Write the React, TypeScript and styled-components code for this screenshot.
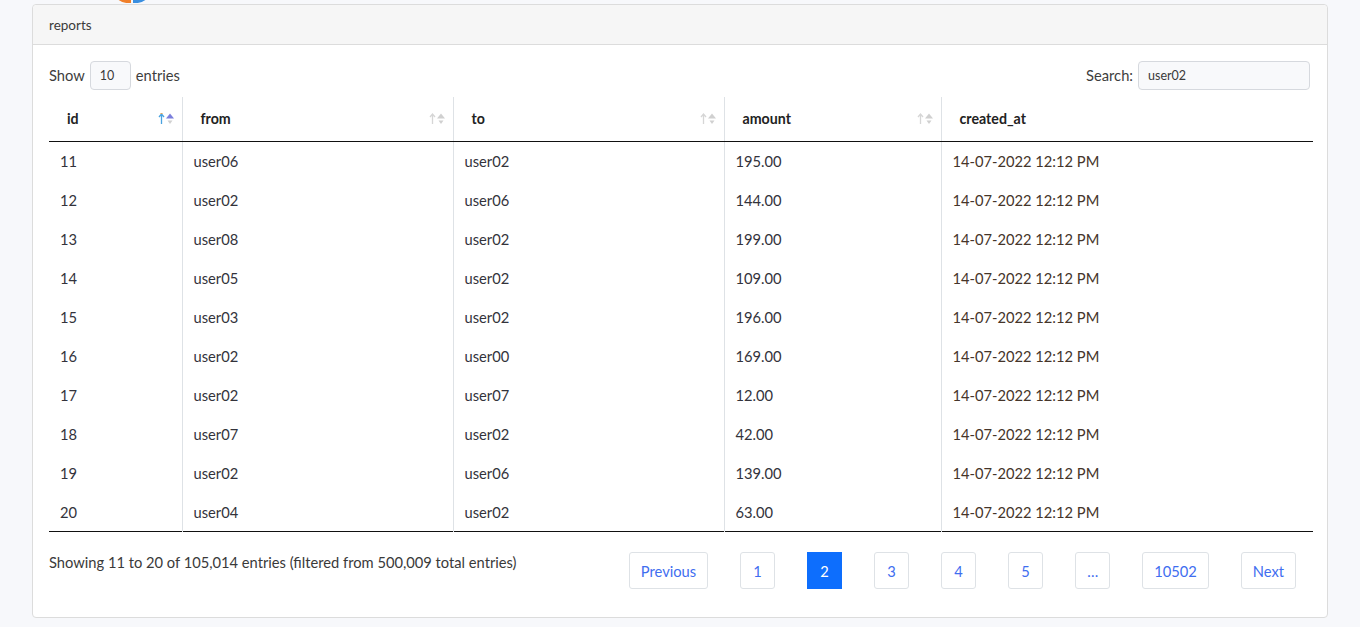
import styled, { createGlobalStyle } from "styled-components";

const GlobalStyle = createGlobalStyle`
  html, body {
    margin: 0;
    padding: 0;
    background: #f7f8fb;
    font-family: "Lato", "Open Sans", sans-serif;
    color: #212529;
  }
`;

const Page = styled.div`
  width: 1360px;
  height: 627px;
  overflow: hidden;
  padding: 0 32px;
  box-sizing: border-box;
`;

const LogoStrip = styled.div`
  height: 4px;
  overflow: hidden;
  padding-left: 80px;

  svg {
    display: block;
    margin-top: -17px;
  }
`;

const Card = styled.div`
  background: #fff;
  border: 1px solid #dcdcdc;
  border-radius: 4px;
  width: 1296px;
  box-sizing: border-box;
`;

const CardHeader = styled.div`
  background: #f6f6f6;
  border-bottom: 1px solid #dcdcdc;
  height: 39px;
  display: flex;
  align-items: center;
  padding-left: 16px;
  font-size: 13.5px;
  color: #3a3a3a;
  border-radius: 4px 4px 0 0;
`;

const CardBody = styled.div`
  padding: 15px 14px 28px 16px;
`;

const Toolbar = styled.div`
  display: flex;
  justify-content: space-between;
  align-items: center;
  font-size: 14.7px;
  color: #3d3d3d;
  height: 30px;
  margin: 0 3px 7px 0;
`;

const Label = styled.label`
  display: flex;
  align-items: center;
  gap: 5px;
`;

const FieldBox = styled.div<{ $width: number }>`
  width: ${(p) => p.$width}px;
  height: 29px;
  box-sizing: border-box;
  border: 1px solid #d6d9de;
  border-radius: 4px;
  background: #f8f9fb;
  display: flex;
  align-items: center;
  padding-left: 9px;
  font-size: 12.5px;
  color: #3a3a3a;
`;

const Table = styled.table`
  width: 100%;
  border-collapse: collapse;
  font-size: 14.7px;
  border-bottom: 1px solid #111;
`;

const HeadCell = styled.th<{ $last?: boolean }>`
  height: 44px;
  box-sizing: border-box;
  text-align: left;
  font-weight: 700;
  font-size: 14.2px;
  color: #222;
  padding: 0 10px 0 18px;
  border-bottom: 1px solid #111;
  border-right: ${(p) => (p.$last ? "none" : "1px solid #dee2e6")};
  position: relative;
`;

const SortIcon = styled.span`
  position: absolute;
  right: 6px;
  top: 50%;
  transform: translateY(-50%);
  display: flex;
  align-items: center;
`;

const Cell = styled.td<{ $last?: boolean; $date?: boolean }>`
  height: 39.1px;
  box-sizing: border-box;
  padding: 0 10px 0 11px;
  color: ${(p) => (p.$date ? "#45352a" : "#33333b")};
  border-right: ${(p) => (p.$last ? "none" : "1px solid #dee2e6")};
`;

const Footer = styled.div`
  display: flex;
  justify-content: space-between;
  align-items: flex-start;
  margin: 20px 3px 0 0;
`;

const Info = styled.div`
  font-size: 14.7px;
  color: #3a3a3a;
  padding-top: 1px;
`;

const Pager = styled.div`
  display: flex;
  gap: 32px;
  margin-right: 14px;
`;

const PageButton = styled.div<{ $active?: boolean }>`
  height: 37px;
  min-width: 35px;
  padding: 0 11px;
  box-sizing: border-box;
  display: flex;
  align-items: center;
  justify-content: center;
  font-size: 14.7px;
  border: 1px solid ${(p) => (p.$active ? "#0d6efd" : "#dee2e6")};
  border-radius: ${(p) => (p.$active ? "0" : "3px")};
  background: ${(p) => (p.$active ? "#0d6efd" : "#fff")};
  color: ${(p) => (p.$active ? "#fff" : "#3f6ef0")};
`;

function Sort({ active }: { active?: boolean }) {
  const arrow = active ? "#4aa3e0" : "#d6d6d6";
  const up = active ? "#7b7fdc" : "#d0d0d0";
  return (
    <SortIcon>
      <svg width="18" height="14" viewBox="0 0 18 14">
        <path d="M3.5 12V2.5M1 5l2.5-3L6 5" stroke={arrow} strokeWidth="1.3" fill="none" />
        {active && <path d="M2.5 2l1-1 1 1" stroke="#f0a040" strokeWidth="1" fill="none" />}
        <path d="M8 6.5L12 1.5L16 6.5Z" fill={up} />
        <path d="M9.5 8.5L12 12L14.5 8.5Z" fill="#d0d0d0" />
      </svg>
    </SortIcon>
  );
}

const rows: [string, string, string, string][] = [
  ["11", "user06", "user02", "195.00"],
  ["12", "user02", "user06", "144.00"],
  ["13", "user08", "user02", "199.00"],
  ["14", "user05", "user02", "109.00"],
  ["15", "user03", "user02", "196.00"],
  ["16", "user02", "user00", "169.00"],
  ["17", "user02", "user07", "12.00"],
  ["18", "user07", "user02", "42.00"],
  ["19", "user02", "user06", "139.00"],
  ["20", "user04", "user02", "63.00"],
];

const pages = ["Previous", "1", "2", "3", "4", "5", "…", "10502", "Next"];

export default function App() {
  return (
    <Page>
      <GlobalStyle />
      <LogoStrip>
        <svg width="40" height="20" viewBox="0 0 40 20">
          <path d="M2 12 A18 18 0 0 0 19 20 L19 17 A15 15 0 0 1 5 10 Z" fill="#f07f2a" />
          <path d="M21 20 A18 18 0 0 0 38 12 L35 10 A15 15 0 0 1 21 17 Z" fill="#3a8fe0" />
        </svg>
      </LogoStrip>
      <Card>
        <CardHeader>reports</CardHeader>
        <CardBody>
          <Toolbar>
            <Label>
              Show <FieldBox $width={41}>10</FieldBox> entries
            </Label>
            <Label>
              Search: <FieldBox $width={172}>user02</FieldBox>
            </Label>
          </Toolbar>
          <Table>
            <colgroup>
              <col style={{ width: 133 }} />
              <col style={{ width: 271 }} />
              <col style={{ width: 271 }} />
              <col style={{ width: 217 }} />
              <col />
            </colgroup>
            <thead>
              <tr>
                <HeadCell>
                  id
                  <Sort active />
                </HeadCell>
                <HeadCell>
                  from
                  <Sort />
                </HeadCell>
                <HeadCell>
                  to
                  <Sort />
                </HeadCell>
                <HeadCell>
                  amount
                  <Sort />
                </HeadCell>
                <HeadCell $last>created_at</HeadCell>
              </tr>
            </thead>
            <tbody>
              {rows.map((r) => (
                <tr key={r[0]}>
                  <Cell>{r[0]}</Cell>
                  <Cell>{r[1]}</Cell>
                  <Cell>{r[2]}</Cell>
                  <Cell>{r[3]}</Cell>
                  <Cell $last $date>
                    14-07-2022 12:12 PM
                  </Cell>
                </tr>
              ))}
            </tbody>
          </Table>
          <Footer>
            <Info>Showing 11 to 20 of 105,014 entries (filtered from 500,009 total entries)</Info>
            <Pager>
              {pages.map((p) => (
                <PageButton key={p} $active={p === "2"}>
                  {p}
                </PageButton>
              ))}
            </Pager>
          </Footer>
        </CardBody>
      </Card>
    </Page>
  );
}
